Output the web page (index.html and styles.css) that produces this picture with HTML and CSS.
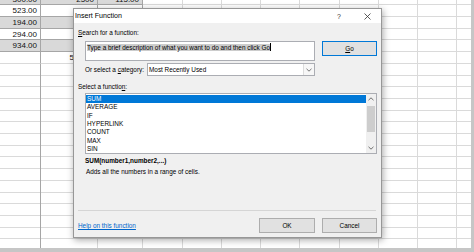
FILE: index.html
```html
<!DOCTYPE html>
<html lang="en">
<head>
  <meta charset="UTF-8" />
  <title>Insert Function</title>
  <link rel="stylesheet" href="styles.css">
</head>
<body>

  <div class="sheet">
    <div class="data">
      <div class="c g">300.00</div><div class="c g">2500</div><div class="c g">115.00</div>
      <div class="c">523.00</div><div class="c"></div><div class="c"></div>
      <div class="c g">194.00</div><div class="c g"></div><div class="c g"></div>
      <div class="c">294.00</div><div class="c"></div><div class="c"></div>
      <div class="c g">934.00</div><div class="c g"></div><div class="c g"></div>
      <div class="c plain"></div><div class="c plain">545.00</div><div class="c plain"></div>
    </div>
  </div>

  <!-- Insert Function dialog -->
  <div class="dialog">
    <div class="titlebar">
      <span class="title">Insert Function</span>
      <span class="help">?</span>
      <span class="close">
        <svg width="7" height="7" viewBox="0 0 7 7"><path d="M0.5 0.5L6.5 6.5M6.5 0.5L0.5 6.5" stroke="#333" stroke-width="0.8" fill="none"/></svg>
      </span>
    </div>

    <div class="content">
      <div class="lbl lbl-search"><u>S</u>earch for a function:</div>

      <div class="search-row">
        <div class="search"><span class="sel">Type a brief description of what you want to do and then click Go</span><span class="caret"></span></div>
        <div class="btn default"><span><u>G</u>o</span></div>
      </div>

      <div class="cat-row">
        <span class="cat-lbl">Or select a <u>c</u>ategory:</span>
        <div class="dropdown">
          <span class="dd-text">Most Recently Used</span>
          <span class="dd-arrow">
            <svg width="6" height="4" viewBox="0 0 6 4"><path d="M0.5 0.8L3 3.2L5.5 0.8" stroke="#555" stroke-width="0.8" fill="none"/></svg>
          </span>
        </div>
      </div>

      <div class="lbl lbl-fn">Select a functio<u>n</u>:</div>

      <div class="list">
        <div class="items">
          <div class="item on">SUM</div>
          <div class="item">AVERAGE</div>
          <div class="item">IF</div>
          <div class="item">HYPERLINK</div>
          <div class="item">COUNT</div>
          <div class="item">MAX</div>
          <div class="item">SIN</div>
        </div>
        <div class="scroll">
          <span class="arrow">
            <svg width="6" height="4" viewBox="0 0 6 4"><path d="M0.5 3.2L3 0.8L5.5 3.2" stroke="#606060" stroke-width="0.9" fill="none"/></svg>
          </span>
          <span class="thumb"></span>
          <span class="arrow down">
            <svg width="6" height="4" viewBox="0 0 6 4"><path d="M0.5 0.8L3 3.2L5.5 0.8" stroke="#606060" stroke-width="0.9" fill="none"/></svg>
          </span>
        </div>
      </div>

      <div class="sig">SUM(number1,number2,...)</div>
      <div class="desc">Adds all the numbers in a range of cells.</div>

      <div class="sep"></div>

      <div class="footer">
        <span class="link">Help on this function</span>
        <div class="btn ok">OK</div>
        <div class="btn">Cancel</div>
      </div>
    </div>
  </div>

</body>
</html>
```

FILE: styles.css
```css
* {
  box-sizing: border-box;
  margin: 0;
  padding: 0;
}

body {
  position: relative;
  width: 474px;
  height: 252px;
  overflow: hidden;
  background: #c6c6c6;
  font-family: "Liberation Sans", Arial, sans-serif;
  color: #000;
}

/* spreadsheet behind the dialog */
.sheet {
  width: 471px;
  height: 248px;
  overflow: hidden;
  background:
    linear-gradient(#a6a6a6, #a6a6a6) 40px 0 / 1px 100% no-repeat,
    linear-gradient(#dadada, #dadada) 97px 0 / 1px 100% no-repeat,
    linear-gradient(#dadada, #dadada) 142px 0 / 1px 100% no-repeat,
    linear-gradient(#dadada, #dadada) 182px 0 / 1px 100% no-repeat,
    linear-gradient(#dadada, #dadada) 221px 0 / 1px 100% no-repeat,
    linear-gradient(#dadada, #dadada) 260px 0 / 1px 100% no-repeat,
    linear-gradient(#dadada, #dadada) 299px 0 / 1px 100% no-repeat,
    linear-gradient(#dadada, #dadada) 339px 0 / 1px 100% no-repeat,
    linear-gradient(#dadada, #dadada) 378px 0 / 1px 100% no-repeat,
    linear-gradient(#dadada, #dadada) 417px 0 / 1px 100% no-repeat,
    linear-gradient(#dadada, #dadada) 456px 0 / 1px 100% no-repeat,
    repeating-linear-gradient(to bottom, transparent -6.4px, transparent 4.3px, #dadada 4.3px, #dadada 5.3px),
    #fff;
}

.data {
  display: grid;
  grid-template-columns: 41px 57px 45px;
  grid-auto-rows: 11.7px;
  width: 143px;
  margin-top: -6.4px;
  font-size: 8px;
}

.data .c {
  border-right: 1px solid #a6a6a6;
  border-bottom: 1px solid #a6a6a6;
  padding: 1px 3px 0 0;
  line-height: 9.7px;
  text-align: right;
  white-space: nowrap;
  color: #111;
}

.data .g {
  background: #d9d9d9;
}

.data .plain {
  border-bottom-color: #dadada;
  border-right-color: #dadada;
  overflow: visible;
}

.data .plain:first-child,
.data .c.plain:nth-child(16) {
  border-right-color: #a6a6a6;
}

/* dialog */
.dialog {
  position: absolute;
  left: 73px;
  top: 8px;
  width: 309px;
  height: 230px;
  border: 1px solid #979797;
  background: #f0f0f0;
  box-shadow: 1px 2px 7px rgba(0, 0, 0, 0.35);
  font-size: 6.4px;
}

.titlebar {
  display: flex;
  align-items: center;
  height: 14px;
  padding-left: 1px;
  background: #fff;
  font-size: 7.1px;
}

.help {
  margin-left: auto;
  margin-right: 9px;
  width: 10px;
  text-align: center;
  color: #333;
  font-size: 7px;
}

.close {
  display: flex;
  justify-content: center;
  width: 28px;
}

.close svg {
  display: block;
}

.content {
  padding: 0 4px;
}

.lbl {
  height: 8px;
  line-height: 8px;
  white-space: nowrap;
}

.lbl-search {
  margin-top: 6px;
}

.search-row {
  display: flex;
  align-items: flex-start;
  gap: 7px;
  margin-top: 4px;
  padding-left: 7px;
}

.search {
  width: 230px;
  height: 20px;
  padding: 1px 1px 0;
  border: 1px solid #abadb3;
  background: #fff;
  line-height: 9px;
  white-space: nowrap;
}

.sel {
  background: #cccccc;
}

.caret {
  display: inline-block;
  width: 1px;
  height: 8px;
  background: #000;
  vertical-align: -1px;
}

.btn {
  display: flex;
  align-items: center;
  justify-content: center;
  width: 55px;
  height: 15px;
  border: 1px solid #adadad;
  background: #e1e1e1;
}

.btn.default {
  border-color: #0078d7;
}

.cat-row {
  display: flex;
  align-items: center;
  height: 13px;
  margin-top: 2px;
  padding-left: 7px;
}

.cat-lbl {
  width: 62px;
  white-space: nowrap;
}

.dropdown {
  display: flex;
  align-items: center;
  width: 168px;
  height: 13px;
  border: 1px solid #abadb3;
  background: #fff;
}

.dd-text {
  padding-left: 1px;
}

.dd-arrow {
  display: flex;
  align-items: center;
  justify-content: center;
  margin-left: auto;
  width: 11px;
  height: 100%;
  border-left: 1px solid #dcdcdc;
  background: #f7f7f7;
}

.lbl-fn {
  margin-top: 7px;
}

.list {
  display: flex;
  width: 292px;
  height: 61px;
  margin: 2px 0 0 7px;
  border: 1px solid #abadb3;
  background: #fff;
}

.items {
  flex: 1;
  padding-top: 1px;
}

.item {
  height: 8.33px;
  line-height: 8.33px;
  padding-left: 1px;
  white-space: nowrap;
}

.item.on {
  background: #0078d7;
  color: #fff;
}

.scroll {
  display: flex;
  flex-direction: column;
  align-items: center;
  width: 10px;
  background: #f0f0f0;
}

.arrow {
  display: flex;
  align-items: center;
  justify-content: center;
  height: 10px;
}

.arrow.down {
  margin-top: auto;
}

.thumb {
  width: 8px;
  height: 26px;
  margin-top: 2px;
  background: #cdcdcd;
}

.sig {
  margin: 3px 0 0 7px;
  height: 8px;
  line-height: 8px;
  font-weight: bold;
}

.desc {
  margin: 3px 0 0 8px;
  height: 8px;
  line-height: 8px;
}

.sep {
  width: 298px;
  height: 1px;
  margin-top: 34px;
  background: #d5d5d5;
}

.footer {
  display: flex;
  align-items: center;
  gap: 7px;
  height: 15px;
  margin-top: 7px;
}

.link {
  color: #0066cc;
  text-decoration: underline;
}

.btn.ok {
  margin-left: auto;
  width: 56px;
}
```
